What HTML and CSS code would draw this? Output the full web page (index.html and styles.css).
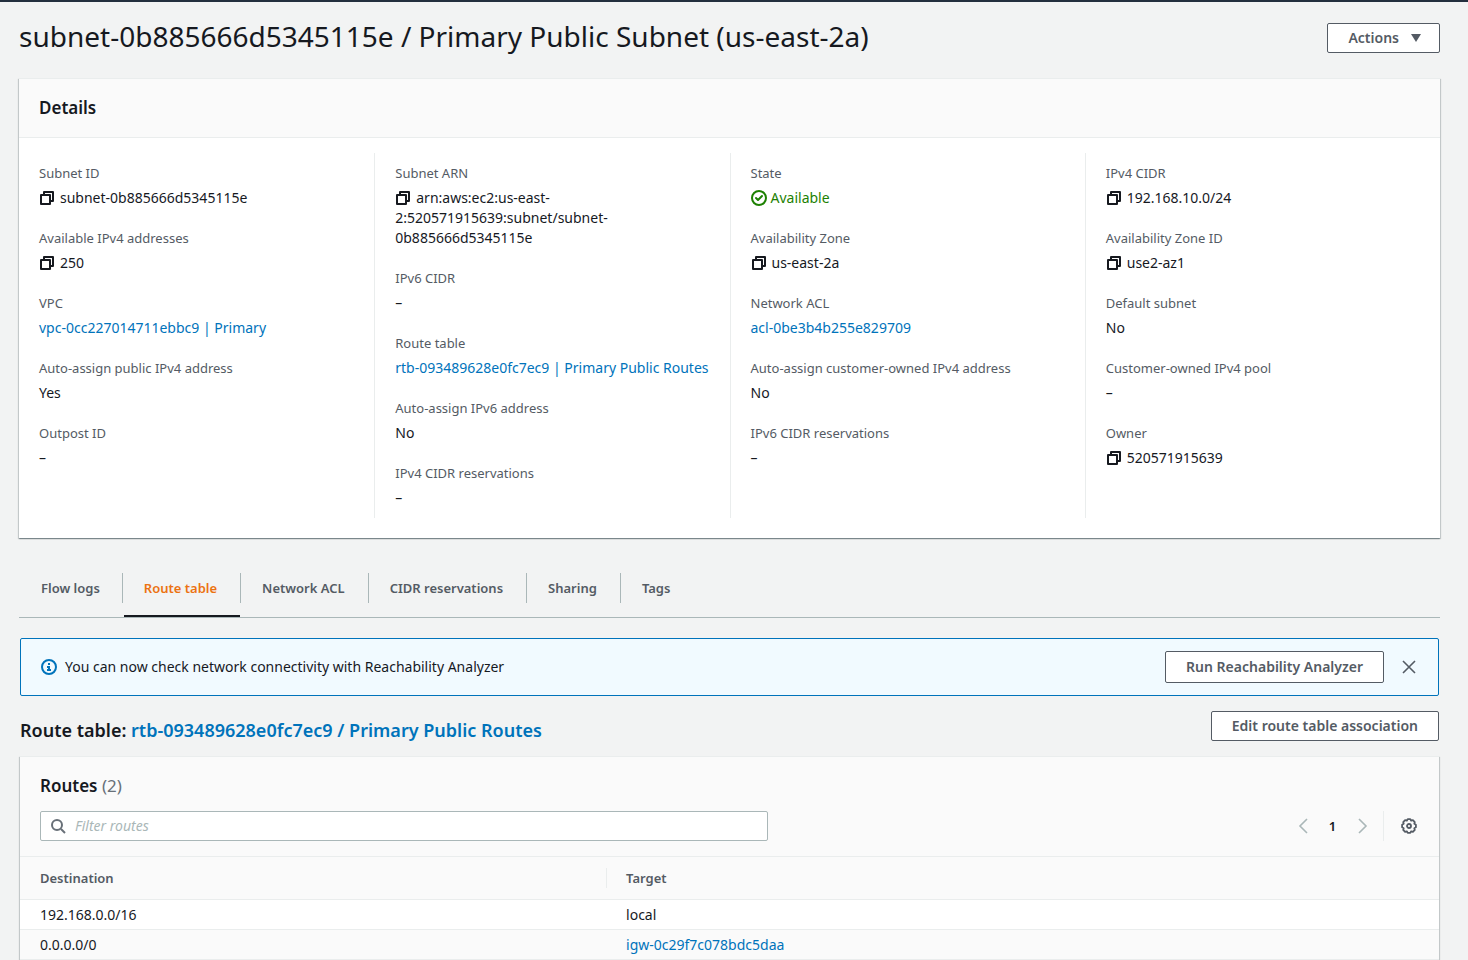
FILE: index.html
```html
<!DOCTYPE html>
<html lang="en">
<head>
<meta charset="utf-8">
<meta name="viewport" content="width=device-width, initial-scale=1">
<title>Subnet details</title>
<link rel="stylesheet" href="styles.css">
</head>
<body>
<svg class="sprite" aria-hidden="true">
  <symbol id="copy" viewBox="0 0 16 16"><path d="M2 5h9v9H2z M5 5V2h9v9h-3" fill="none" stroke="currentColor" stroke-width="2" stroke-linejoin="round"/></symbol>
</svg>
<main class="page">
  <header class="page-header">
    <h1 class="page-title">subnet-0b885666d5345115e / Primary Public Subnet (us-east-2a)</h1>
    <button class="button button-menu" type="button">Actions
      <svg class="caret" viewBox="0 0 10 8" aria-hidden="true"><path d="M0 0h10L5 8z" fill="currentColor"/></svg>
    </button>
  </header>

  <section class="panel">
    <h2 class="panel-title">Details</h2>
    <div class="columns">
      <dl class="column">
        <div class="field"><dt>Subnet ID</dt><dd><button class="copy" type="button" aria-label="Copy subnet ID"><svg class="icon"><use href="#copy"/></svg></button>subnet-0b885666d5345115e</dd></div>
        <div class="field"><dt>Available IPv4 addresses</dt><dd><button class="copy" type="button" aria-label="Copy available addresses"><svg class="icon"><use href="#copy"/></svg></button>250</dd></div>
        <div class="field"><dt>VPC</dt><dd><a href="#vpc">vpc-0cc227014711ebbc9 | Primary</a></dd></div>
        <div class="field"><dt>Auto-assign public IPv4 address</dt><dd>Yes</dd></div>
        <div class="field"><dt>Outpost ID</dt><dd>–</dd></div>
      </dl>
      <dl class="column">
        <div class="field"><dt>Subnet ARN</dt><dd><button class="copy" type="button" aria-label="Copy subnet ARN"><svg class="icon"><use href="#copy"/></svg></button>arn:aws:ec2:us-east-<wbr>2:520571915639:subnet/subnet-<wbr>0b885666d5345115e</dd></div>
        <div class="field"><dt>IPv6 CIDR</dt><dd>–</dd></div>
        <div class="field"><dt>Route table</dt><dd><a href="#rtb">rtb-093489628e0fc7ec9 | Primary Public Routes</a></dd></div>
        <div class="field"><dt>Auto-assign IPv6 address</dt><dd>No</dd></div>
        <div class="field"><dt>IPv4 CIDR reservations</dt><dd>–</dd></div>
      </dl>
      <dl class="column">
        <div class="field"><dt>State</dt><dd class="status"><svg class="icon" viewBox="0 0 16 16" aria-hidden="true"><g fill="none" stroke="currentColor" stroke-width="2"><circle cx="8" cy="8" r="7"/><path d="M5 8l2 2 4-4" stroke-linecap="round" stroke-linejoin="round"/></g></svg>Available</dd></div>
        <div class="field"><dt>Availability Zone</dt><dd><button class="copy" type="button" aria-label="Copy availability zone"><svg class="icon"><use href="#copy"/></svg></button>us-east-2a</dd></div>
        <div class="field"><dt>Network ACL</dt><dd><a href="#acl-details">acl-0be3b4b255e829709</a></dd></div>
        <div class="field"><dt>Auto-assign customer-owned IPv4 address</dt><dd>No</dd></div>
        <div class="field"><dt>IPv6 CIDR reservations</dt><dd>–</dd></div>
      </dl>
      <dl class="column">
        <div class="field"><dt>IPv4 CIDR</dt><dd><button class="copy" type="button" aria-label="Copy IPv4 CIDR"><svg class="icon"><use href="#copy"/></svg></button>192.168.10.0/24</dd></div>
        <div class="field"><dt>Availability Zone ID</dt><dd><button class="copy" type="button" aria-label="Copy availability zone ID"><svg class="icon"><use href="#copy"/></svg></button>use2-az1</dd></div>
        <div class="field"><dt>Default subnet</dt><dd>No</dd></div>
        <div class="field"><dt>Customer-owned IPv4 pool</dt><dd>–</dd></div>
        <div class="field"><dt>Owner</dt><dd><button class="copy" type="button" aria-label="Copy owner"><svg class="icon"><use href="#copy"/></svg></button>520571915639</dd></div>
      </dl>
    </div>
  </section>

  <nav class="tabs" aria-label="Subnet sections">
    <a class="tab" href="#flow">Flow logs</a>
    <a class="tab tab-active" href="#routes" aria-current="page">Route table</a>
    <a class="tab" href="#acl">Network ACL</a>
    <a class="tab" href="#cidr">CIDR reservations</a>
    <a class="tab" href="#sharing">Sharing</a>
    <a class="tab" href="#tags">Tags</a>
  </nav>

  <div class="tab-content">
    <div class="notice">
      <svg class="icon notice-icon" viewBox="0 0 16 16" aria-hidden="true"><circle cx="8" cy="8" r="7" fill="none" stroke="currentColor" stroke-width="2"/><path d="M7 4h2v2H7zM6 7h3v3h1v2H6v-2h1V9H6z" fill="currentColor"/></svg>
      <p class="notice-text">You can now check network connectivity with Reachability Analyzer</p>
      <button class="button button-tall" type="button">Run Reachability Analyzer</button>
      <button class="icon-button" type="button" aria-label="Dismiss"><svg class="icon" viewBox="0 0 16 16"><path d="M2 2l12 12M14 2L2 14" stroke="currentColor" stroke-width="1.6"/></svg></button>
    </div>

    <div class="section-header">
      <h2 class="section-title">Route table: <a href="#rtb">rtb-093489628e0fc7ec9 / Primary Public Routes</a></h2>
      <button class="button" type="button">Edit route table association</button>
    </div>

    <section class="panel" id="routes">
      <div class="routes-header">
        <h3 class="routes-title">Routes <span class="count">(2)</span></h3>
        <div class="toolbar">
          <label class="search">
            <svg class="icon" viewBox="0 0 16 16" aria-hidden="true"><g fill="none" stroke="currentColor" stroke-width="2"><circle cx="7" cy="7" r="5"/><path d="M11 11l4 4"/></g></svg>
            <input class="search-input" type="text" placeholder="Filter routes" aria-label="Filter routes">
          </label>
          <div class="pager">
            <button class="icon-button pager-arrow" type="button" aria-label="Previous page"><svg class="icon" viewBox="0 0 16 16"><path d="M12 1L5 8l7 7" fill="none" stroke="currentColor" stroke-width="1.6"/></svg></button>
            <button class="page-number" type="button">1</button>
            <button class="icon-button pager-arrow" type="button" aria-label="Next page"><svg class="icon" viewBox="0 0 16 16"><path d="M5 1l7 7-7 7" fill="none" stroke="currentColor" stroke-width="1.6"/></svg></button>
            <span class="settings"><button class="icon-button" type="button" aria-label="Preferences"><svg class="icon" viewBox="0 0 16 16"><g fill="none" stroke="currentColor" stroke-width="1.8" stroke-linejoin="round"><path d="M14.900 9.300L13.300 10.200L13.800 11.900L11.900 13.800L10.200 13.300L9.300 14.900H6.700L5.800 13.300L4.100 13.800L2.200 11.900L2.700 10.200L1.100 9.300V6.700L2.700 5.800L2.200 4.100L4.100 2.200L5.800 2.700L6.700 1.100H9.300L10.200 2.700L11.900 2.200L13.800 4.100L13.300 5.800L14.900 6.700z"/><circle cx="8" cy="8" r="2"/></g></svg></button></span>
          </div>
        </div>
      </div>
      <table class="table">
        <thead><tr><th scope="col">Destination</th><th scope="col"><span class="th-divider">Target</span></th></tr></thead>
        <tbody>
          <tr><td>192.168.0.0/16</td><td>local</td></tr>
          <tr><td>0.0.0.0/0</td><td><a href="#igw">igw-0c29f7c078bdc5daa</a></td></tr>
        </tbody>
      </table>
    </section>
  </div>
</main>
</body>
</html>
```
FILE: styles.css
```css
* { box-sizing: border-box; }
html { overflow: hidden; }
body {
  margin: 0;
  background: #f2f3f3;
  color: #16191f;
  font: 14px/20px "Noto Sans", "Open Sans", sans-serif;
}
h1, h2, h3, p, dl, dt, dd { margin: 0; }
button { font: inherit; cursor: pointer; }
a { color: #0073bb; text-decoration: none; }
.sprite { display: none; }
.icon { display: block; flex: none; width: 16px; height: 16px; }

.page { border-top: 2px solid #232f3e; padding: 16px 28px 0 19px; }
.page-header { display: flex; align-items: center; justify-content: space-between; min-height: 40px; margin-bottom: 20px; }
.page-title { padding-bottom: 4px; font-size: 28px; line-height: 36px; font-weight: 400; }

.button {
  height: 30px;
  padding: 0 20px;
  border: 1px solid #545b64;
  border-radius: 2px;
  background: #fff;
  color: #545b64;
  font-weight: 600;
  white-space: nowrap;
}
.button-tall { height: 32px; }
.button-menu { display: flex; align-items: center; gap: 12px; padding-right: 18px; }
.caret { width: 10px; height: 8px; }
.icon-button { display: flex; padding: 0; border: 0; background: none; color: #545b64; }

.panel {
  background: #fff;
  border-top: 1px solid #eaeded;
  box-shadow: 0 1px 1px 0 rgba(0, 28, 36, .3), 1px 1px 1px 0 rgba(0, 28, 36, .15), -1px 1px 1px 0 rgba(0, 28, 36, .15);
}
.panel-title { padding: 18px 20px; background: #fafafa; border-bottom: 1px solid #eaeded; font-size: 17px; line-height: 22px; font-weight: 600; }
.columns { display: grid; grid-template-columns: repeat(4, 1fr); padding: 15px 0 20px; }
.column { padding: 10px 20px; border-left: 1px solid #eaeded; }
.column:first-child { border-left-color: transparent; padding-left: 19px; }
.field + .field { margin-top: 20px; }
.field dt { color: #545b64; margin-bottom: 5px; font-size: 13px; }
.copy { display: inline-flex; vertical-align: -3px; margin-right: 5px; padding: 0; border: 0; background: none; color: #16191f; }
.field dd { height: auto; }
.status { display: flex; align-items: center; gap: 4px; color: #1d8102; }

.tabs { display: flex; margin-top: 29px; border-bottom: 1px solid #aab7b8; font-size: 13px; }
.tab { position: relative; padding: 11px 22px 19px; color: #545b64; font-weight: 600; }
.tab + .tab { padding-right: 23px; }
.tab + .tab::before { content: ""; position: absolute; left: 0; top: 6px; height: 30px; border-left: 1px solid #aab7b8; }
.tab-active { color: #ec7211; }
.tab-active::after { content: ""; position: absolute; left: 2px; right: 0; bottom: 0; height: 2px; background: #16191f; }

.tab-content { padding: 20px 1px 0; }
.notice { display: flex; align-items: center; padding: 12px 21px 12px 20px; min-height: 58px; border: 1px solid #0073bb; border-radius: 2px; background: #f1faff; }
.notice-icon { color: #0073bb; margin-right: 8px; }
.notice-text { flex: 1; }
.notice .icon-button { margin-left: 17px; }

.section-header { display: flex; align-items: center; justify-content: space-between; margin: 15px 0; }
.section-title { padding-top: 8px; font-size: 18px; line-height: 22px; font-weight: 600; }

.routes-header { padding: 18px 20px 15px; background: #fafafa; border-bottom: 1px solid #eaeded; }
.routes-title { font-size: 17px; line-height: 22px; font-weight: 600; }
.count { color: #687078; font-weight: 400; }
.toolbar { display: flex; justify-content: space-between; margin-top: 14px; }
.search { display: flex; align-items: center; gap: 9px; width: 52.8%; height: 30px; padding: 0 9px; border: 1px solid #aab7b8; border-radius: 2px; background: #fff; color: #687078; }
.search-input { flex: 1; min-width: 0; padding: 0; border: 0; outline: 0; background: none; font: inherit; color: #16191f; }
.search-input::placeholder { color: #aab7b8; font-style: italic; opacity: 1; }
.pager { display: flex; align-items: center; }
.pager-arrow { color: #aab7b8; }
.page-number { width: 43px; padding: 0; border: 0; background: none; color: #16191f; font-size: 13px; font-weight: 600; }
.settings { display: flex; align-items: center; height: 30px; margin-left: 13px; padding: 0 2px 0 17px; border-left: 1px solid #eaeded; }

.table { width: 100%; border-collapse: collapse; table-layout: fixed; }
.table th { padding: 11px 20px; background: #fafafa; border-bottom: 1px solid #eaeded; color: #545b64; font-size: 13px; font-weight: 600; text-align: left; }
.table th:first-child { width: 41.3%; }
.th-divider { position: relative; }
.th-divider::before { content: ""; position: absolute; left: -20px; top: -1px; height: 20px; border-left: 1px solid #eaeded; }
.table td { padding: 5px 20px 4px; border-bottom: 1px solid #eaeded; }
.table tbody tr:nth-child(even) { background: #fafafa; }
```
